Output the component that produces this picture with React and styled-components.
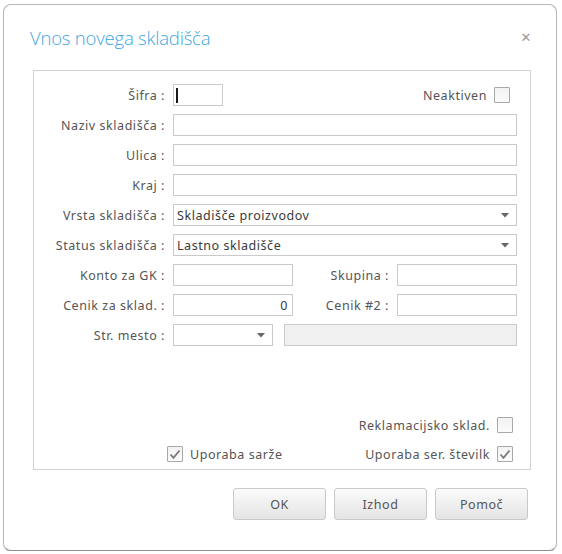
import React from "react";
import styled, { createGlobalStyle } from "styled-components";

const Global = createGlobalStyle`
  html, body {
    margin: 0;
    padding: 0;
    background: #ffffff;
  }
  body {
    font-family: "Noto Sans", Tahoma, sans-serif;
    font-size: 12.5px;
    letter-spacing: 0.55px;
    color: #555;
  }
`;

const Dialog = styled.div`
  margin: 4px 0 0 3px;
  width: 554px;
  height: 547px;
  box-sizing: border-box;
  border: 1px solid #b8b8b8;
  border-bottom-color: #8e8e8e;
  border-radius: 8px;
  background: #fff;
  box-shadow: 0 1px 1px rgba(0, 0, 0, 0.15);
  display: flex;
  flex-direction: column;
`;

const Header = styled.div`
  height: 65px;
  display: flex;
  align-items: center;
  justify-content: space-between;
  padding: 0 24px 0 26px;
`;

const Title = styled.h1`
  margin: 0;
  font-family: "Open Sans", "Noto Sans", sans-serif;
  font-weight: 300;
  font-size: 18.5px;
  letter-spacing: -0.2px;
  color: #3ea7e2;
`;

const Close = styled.span`
  font-family: "DejaVu Sans", sans-serif;
  font-size: 13px;
  color: #999;
`;

const Panel = styled.div`
  margin: 0 25px 0 29px;
  height: 400px;
  box-sizing: border-box;
  border: 1px solid #d2d2d2;
  padding: 13px 13px 7px 0;
  display: flex;
  flex-direction: column;
`;

const Rows = styled.div`
  display: flex;
  flex-direction: column;
  gap: 8px;
`;

const Row = styled.div`
  display: flex;
  align-items: center;
  height: 22px;
`;

const Label = styled.span`
  width: 132px;
  box-sizing: border-box;
  padding-right: 1px;
  margin-right: 7px;
  text-align: right;
  white-space: nowrap;
  flex: none;
`;

const SideLabel = styled.span`
  flex: 1;
  text-align: right;
  padding-right: ${(p) => p.$gap || 8}px;
  white-space: nowrap;
`;

const Input = styled.input`
  box-sizing: border-box;
  height: 22px;
  width: ${(p) => (p.$w ? `${p.$w}px` : "auto")};
  flex: ${(p) => (p.$w ? "none" : "1")};
  min-width: 0;
  border: 1px solid #cacaca;
  background: ${(p) => (p.disabled ? "#f0f0f0" : "#fff")};
  font: inherit;
  letter-spacing: inherit;
  color: #3a3a3a;
  padding: 0 4px;
  margin: 0 0 0 ${(p) => p.$ml || 0}px;
  text-align: ${(p) => p.$align || "left"};
  outline: none;
`;

const CaretBox = styled.div`
  box-sizing: border-box;
  height: 22px;
  width: 50px;
  border: 1px solid #cacaca;
  display: flex;
  align-items: center;
  padding-left: 2px;
`;

const Caret = styled.span`
  width: 2px;
  height: 15px;
  background: #1a1a1a;
`;

const Select = styled.div`
  box-sizing: border-box;
  height: 22px;
  width: ${(p) => (p.$w ? `${p.$w}px` : "auto")};
  flex: ${(p) => (p.$w ? "none" : "1")};
  border: 1px solid #cacaca;
  display: flex;
  align-items: center;
  padding: 0 7px 0 3px;
  color: #3a3a3a;
`;

const SelectText = styled.span`
  flex: 1;
`;

const Spacer = styled.div`
  flex: 1;
`;

const CheckLine = styled.label`
  display: flex;
  align-items: center;
  gap: 7px;
  white-space: nowrap;
  margin-right: ${(p) => p.$mr || 0}px;
`;

const Box = styled.span`
  width: 16px;
  height: 16px;
  box-sizing: border-box;
  border: 1px solid #a8a8a8;
  border-radius: 1px;
  background: linear-gradient(#f2f2f2, #fbfbfb);
  display: inline-flex;
  align-items: center;
  justify-content: center;
  flex: none;
`;

const Checks = styled.div`
  margin-top: auto;
  display: flex;
  flex-direction: column;
  gap: 13px;
`;

const CheckRow = styled.div`
  display: flex;
  align-items: center;
  justify-content: ${(p) => p.$justify || "flex-end"};
  height: 16px;
  padding-left: ${(p) => p.$pl || 0}px;
`;

const Footer = styled.div`
  display: flex;
  justify-content: flex-end;
  gap: 8px;
  padding: 18px 28px 0 0;
`;

const Button = styled.button`
  width: 93px;
  height: 32px;
  border: 1px solid #c9c9c9;
  border-radius: 3px;
  background: linear-gradient(#fbfbfb, #e4e4e4);
  font: inherit;
  letter-spacing: inherit;
  color: #555;
  padding: 0;
`;

const Arrow = () => (
  <svg width="8" height="5" viewBox="0 0 8 5">
    <path d="M0 0 H8 L4 4.5 Z" fill="#666" />
  </svg>
);

const Check = ({ checked }) => (
  <Box>
    {checked && (
      <svg width="12" height="11" viewBox="0 0 12 11">
        <path
          d="M1.5 5.5 L4.5 8.8 L10.5 1.5"
          fill="none"
          stroke="#7a7a7a"
          strokeWidth="1.8"
        />
      </svg>
    )}
  </Box>
);

const App = () => (
  <>
    <Global />
    <Dialog>
      <Header>
        <Title>Vnos novega skladišča</Title>
        <Close>✕</Close>
      </Header>
      <Panel>
        <Rows>
          <Row>
            <Label>Šifra :</Label>
            <CaretBox>
              <Caret />
            </CaretBox>
            <Spacer />
            <CheckLine $mr={7}>
              Neaktiven <Check />
            </CheckLine>
          </Row>
          <Row>
            <Label>Naziv skladišča :</Label>
            <Input readOnly />
          </Row>
          <Row>
            <Label>Ulica :</Label>
            <Input readOnly />
          </Row>
          <Row>
            <Label>Kraj :</Label>
            <Input readOnly />
          </Row>
          <Row>
            <Label>Vrsta skladišča :</Label>
            <Select>
              <SelectText>Skladišče proizvodov</SelectText>
              <Arrow />
            </Select>
          </Row>
          <Row>
            <Label>Status skladišča :</Label>
            <Select>
              <SelectText>Lastno skladišče</SelectText>
              <Arrow />
            </Select>
          </Row>
          <Row>
            <Label>Konto za GK :</Label>
            <Input readOnly $w={120} />
            <SideLabel>Skupina :</SideLabel>
            <Input readOnly $w={120} />
          </Row>
          <Row>
            <Label>Cenik za sklad. :</Label>
            <Input readOnly $w={120} $align="right" value="0" />
            <SideLabel>Cenik #2 :</SideLabel>
            <Input readOnly $w={120} />
          </Row>
          <Row>
            <Label>Str. mesto :</Label>
            <Select $w={100}>
              <SelectText />
              <Arrow />
            </Select>
            <Input disabled $ml={11} />
          </Row>
        </Rows>
        <Checks>
          <CheckRow>
            <CheckLine $mr={4}>
              Reklamacijsko sklad. <Check />
            </CheckLine>
          </CheckRow>
          <CheckRow $justify="space-between" $pl={133}>
            <CheckLine>
              <Check checked /> Uporaba sarže
            </CheckLine>
            <CheckLine $mr={4}>
              Uporaba ser. številk <Check checked />
            </CheckLine>
          </CheckRow>
        </Checks>
      </Panel>
      <Footer>
        <Button>OK</Button>
        <Button>Izhod</Button>
        <Button>Pomoč</Button>
      </Footer>
    </Dialog>
  </>
);

export default App;
